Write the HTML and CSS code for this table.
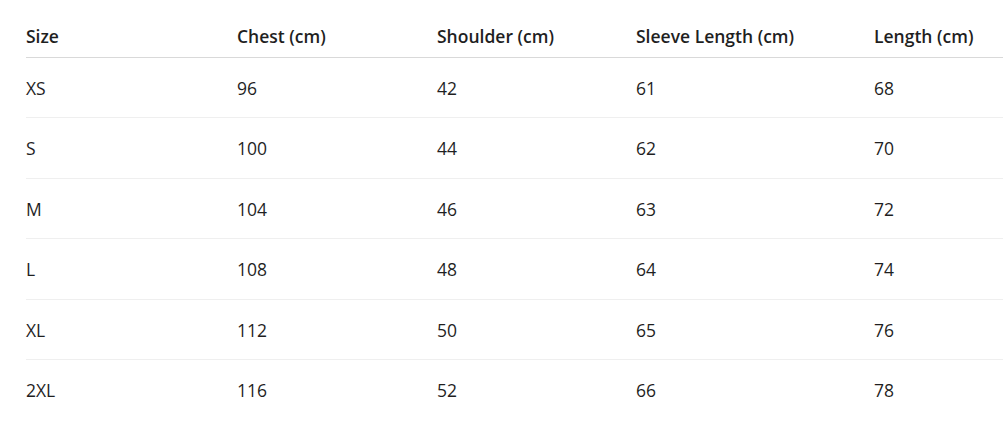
FILE: index.html
```html
<!DOCTYPE html>
<html lang="en">
<head>
<meta charset="utf-8">
<title>Size Chart</title>
<link rel="stylesheet" href="styles.css">
</head>
<body>
<div class="wrap">
  <table class="size-table">
    <colgroup>
      <col class="c1"><col class="c2"><col class="c3"><col class="c4"><col class="c5">
    </colgroup>
    <thead>
      <tr><th>Size</th><th>Chest (cm)</th><th>Shoulder (cm)</th><th>Sleeve Length (cm)</th><th>Length (cm)</th></tr>
    </thead>
    <tbody>
      <tr><td>XS</td><td>96</td><td>42</td><td>61</td><td>68</td></tr>
      <tr><td>S</td><td>100</td><td>44</td><td>62</td><td>70</td></tr>
      <tr><td>M</td><td>104</td><td>46</td><td>63</td><td>72</td></tr>
      <tr><td>L</td><td>108</td><td>48</td><td>64</td><td>74</td></tr>
      <tr><td>XL</td><td>112</td><td>50</td><td>65</td><td>76</td></tr>
      <tr><td>2XL</td><td>116</td><td>52</td><td>66</td><td>78</td></tr>
    </tbody>
  </table>
</div>
</body>
</html>
```
FILE: styles.css
```css
html, body {
  margin: 0;
  padding: 0;
  background: #ffffff;
  overflow: hidden;
}
body {
  font-family: "Open Sans", "Noto Sans", "Liberation Sans", sans-serif;
  color: #1f1f1f;
  font-size: 17.5px;
}
.wrap {
  padding: 16px 0 0 26px;
}
.size-table {
  border-collapse: collapse;
  table-layout: fixed;
  width: 1000px;
}
.c1 { width: 211px; }
.c2 { width: 200px; }
.c3 { width: 199px; }
.c4 { width: 238px; }
.c5 { width: 152px; }
.size-table th {
  text-align: left;
  font-weight: 600;
  padding: 8px 0;
  line-height: 25px;
  border-bottom: 1px solid #d9d9d9;
  white-space: nowrap;
}
.size-table td {
  padding: 19px 0 17px;
  line-height: 23.4px;
  border-bottom: 1px solid #efefef;
  white-space: nowrap;
}
.size-table tbody tr:last-child td {
  border-bottom: none;
}
```
